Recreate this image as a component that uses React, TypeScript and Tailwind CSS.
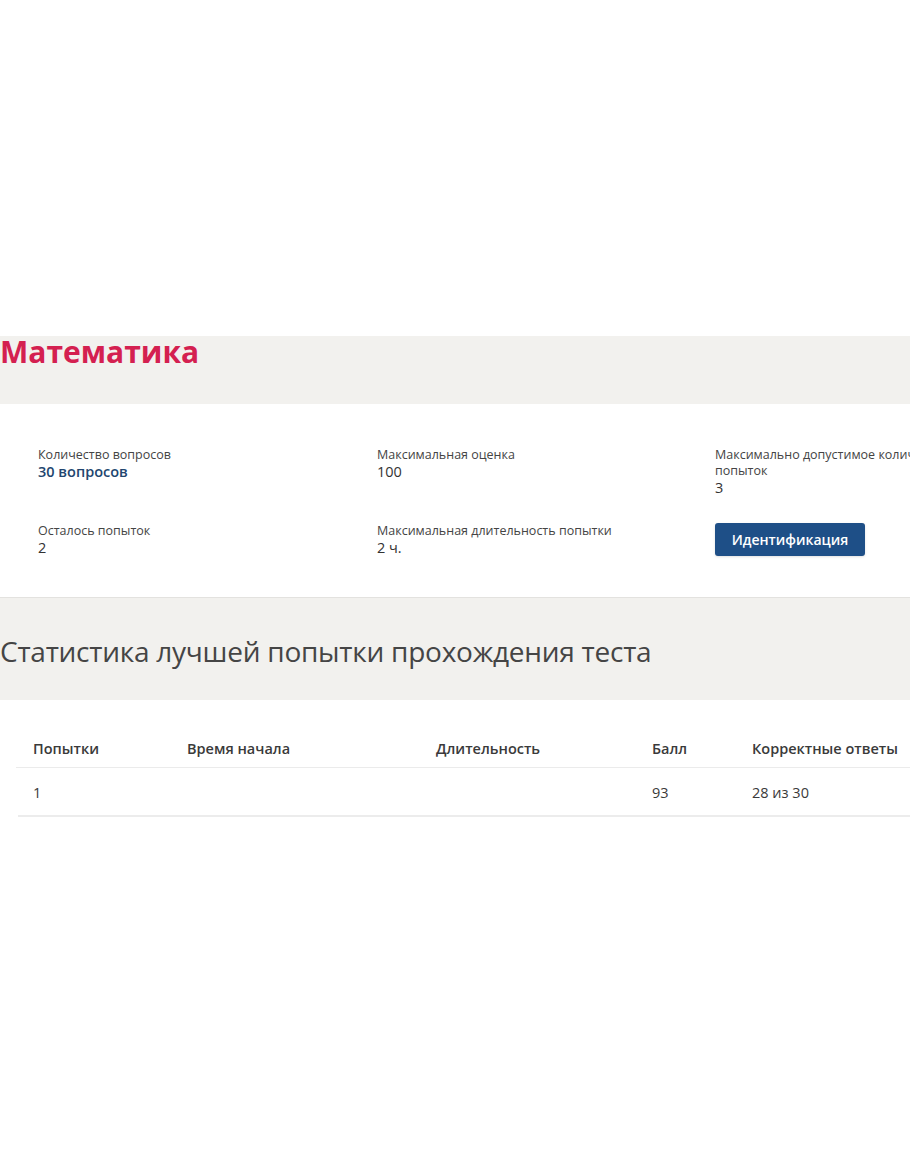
import React from 'react'

const info = [
  { label: 'Количество вопросов', value: '30 вопросов', accent: true },
  { label: 'Максимальная оценка', value: '100' },
  { label: 'Максимально допустимое количество попыток', value: '3' },
  { label: 'Осталось попыток', value: '2' },
  { label: 'Максимальная длительность попытки', value: '2 ч.' },
]

const cols = ['w-[154px]', 'w-[249px]', 'w-[216px]', 'w-[100px]', 'w-[180px]']
const headers = ['Попытки', 'Время начала', 'Длительность', 'Балл', 'Корректные ответы']
const row = ['1', '', '', '93', '28 из 30']

export default function App (): React.JSX.Element {
  return (
    <div className="w-[910px] h-[1155px] bg-white overflow-hidden font-['Open_Sans',sans-serif] text-[#333]">
      <div className="h-[336px]" />

      <div className="h-[68px] bg-[#f2f1ee]">
        <h1 className="text-[30px] leading-[32px] font-bold text-[#d42050]">Математика</h1>
      </div>

      <div className="h-[193px] w-[1000px] pl-[38px] pt-[43px] grid grid-cols-[339px_338px_260px] gap-y-[26px] content-start">
        {info.map((item) => (
          <div key={item.label} className="flex flex-col">
            <span className="text-[12.5px] leading-[16px] text-[#444]">{item.label}</span>
            <span className={item.accent ? 'text-[14.5px] leading-[18px] font-semibold text-[#22466f]' : 'text-[14.5px] leading-[18px] text-[#333]'}>{item.value}</span>
          </div>
        ))}
        <div>
          <button className="w-[150px] h-[33px] rounded-[3px] bg-[#1e4f87] text-white text-[14px] font-semibold shadow-sm">Идентификация</button>
        </div>
      </div>

      <div className="h-[103px] bg-[#f2f1ee] border-t border-[#e3e2df] flex items-center">
        <h2 className="text-[28px] leading-[34px] text-[#454545] tracking-[-0.25px] pt-[4px]">Статистика лучшей попытки прохождения теста</h2>
      </div>

      <div className="w-[1000px] pl-[16px] pt-[38px]">
        <div className="flex border-b border-[#ebebeb] h-[30px] pl-[17px]">
          {headers.map((h, i) => (
            <div key={h} className={`${cols[i]} text-[14.5px] font-semibold text-[#3a3a3a]`}>{h}</div>
          ))}
        </div>
        <div className="ml-[2px] border-b-2 border-[#ececec] h-[49px] flex items-center pl-[15px] pt-[2px]">
          {row.map((c, i) => (
            <div key={i} className={`${cols[i]} text-[14.5px] text-[#3a3a3a]`}>{c}</div>
          ))}
        </div>
      </div>
    </div>
  )
}
